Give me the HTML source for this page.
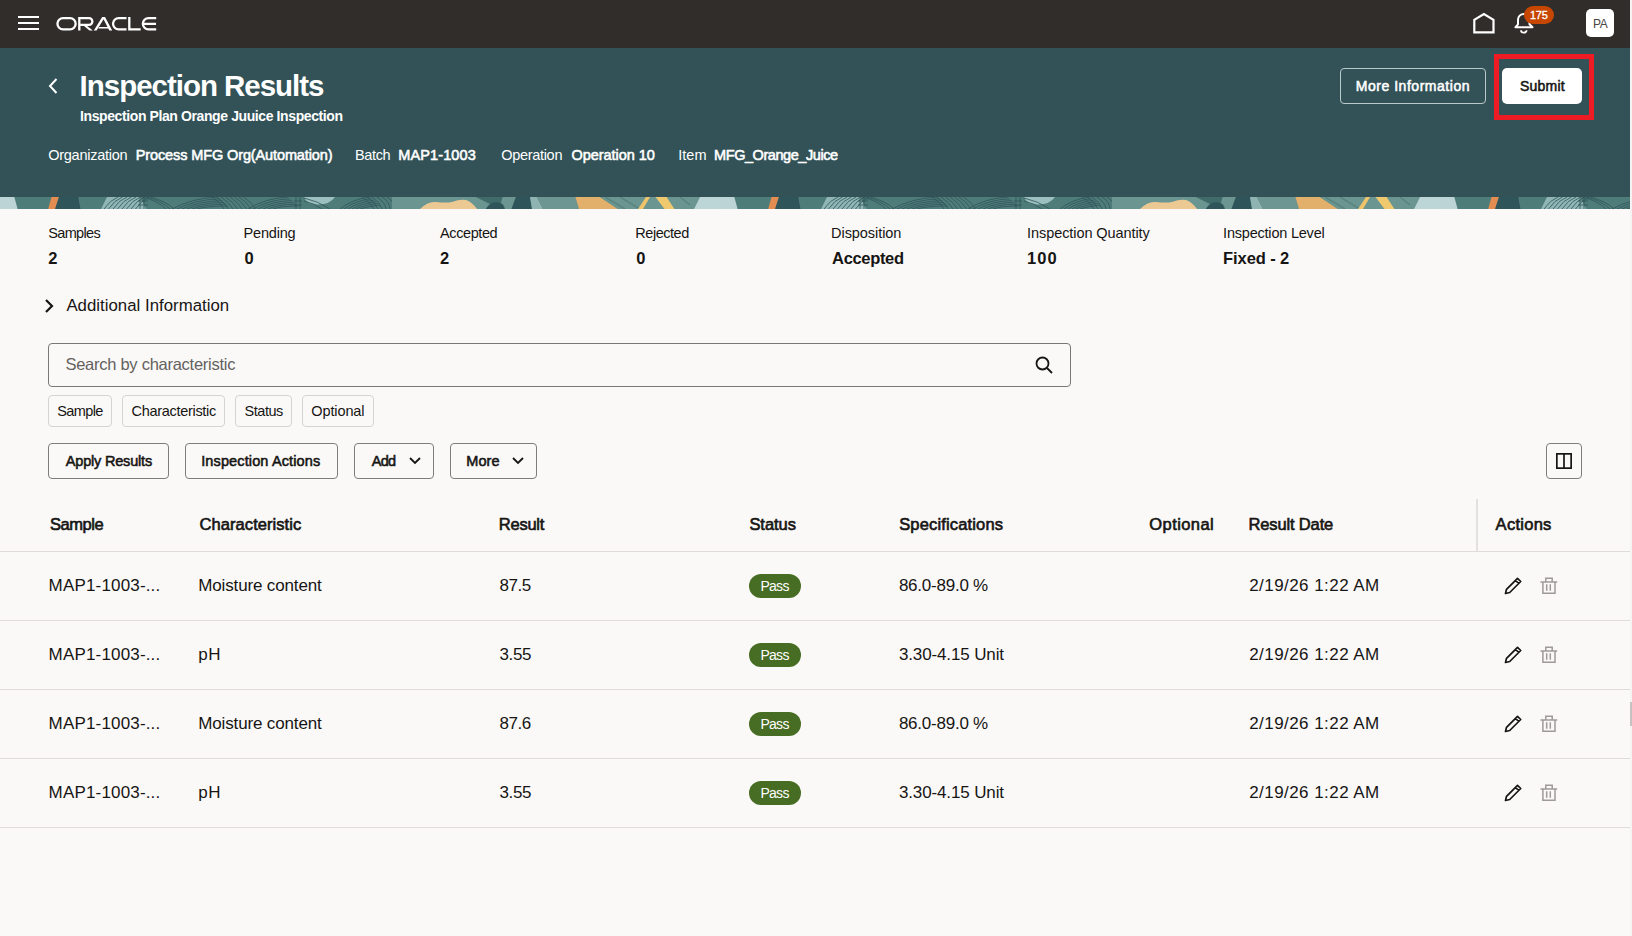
<!DOCTYPE html>
<html><head><meta charset="utf-8">
<style>
html,body{margin:0;padding:0;width:1632px;height:936px;overflow:hidden;background:#fbf9f8;font-family:"Liberation Sans",sans-serif;}
.t{position:absolute;white-space:pre;font-family:"Liberation Sans",sans-serif;}
.abs{position:absolute;}
#hdr{position:absolute;left:0;top:0;width:1630px;height:48px;background:#312d2a;}
#ban{position:absolute;left:0;top:48px;width:1630px;height:149px;background:#325257;}
#strip{position:absolute;left:0;top:197px;width:1630px;height:12px;}
.btn{position:absolute;box-sizing:border-box;border:1px solid #7f7d7b;border-radius:4px;background:#fbf9f8;}
.chip{position:absolute;box-sizing:border-box;border:1px solid #d6d4d2;border-radius:4px;background:#fbf9f8;}
.hl{position:absolute;left:0;width:1630px;height:1px;background:#dfdcd9;}
.badge{position:absolute;width:52px;height:24px;border-radius:12px;background:#476c23;}
</style></head><body>
<div id="hdr"></div>
<!-- hamburger -->
<div class="abs" style="left:18px;top:16px;width:21px;height:2px;background:#fff"></div>
<div class="abs" style="left:18px;top:22px;width:21px;height:2px;background:#fff"></div>
<div class="abs" style="left:18px;top:28px;width:21px;height:2px;background:#fff"></div>
<!-- ORACLE logo -->
<svg class="abs" style="left:56px;top:17px" width="101" height="14" viewBox="0 0 101 14">
<g fill="none" stroke="#fff" stroke-width="2.3">
<rect x="1.45" y="1.15" width="18.2" height="11.2" rx="5.6"/>
<path d="M23.3 13.5V1.15H33a3.35 3.35 0 0 1 0 6.7H24.5"/>
<path d="M70.5 1.15H62.65a5.6 5.6 0 0 0 0 11.2H70.5"/>
<path d="M73.3 0V12.35H84.7"/>
<path d="M100.2 1.15H92.45a5.6 5.6 0 0 0 0 11.2H100.2M88 6.9H100"/>
</g>
<g fill="#fff">
<path d="M26.8 7.9h3.1l6.9 5.6h-3.3z"/>
<path d="M46.2 0h2.8l7.2 13.5h-2.9L47.6 2.2L40.6 13.5h-2.8z"/>
<path d="M43.2 9.9h8.9l0.8 1.6h-10.6z"/>
</g>
</svg>
<!-- home -->
<svg class="abs" style="left:1472px;top:12px" width="24" height="23" viewBox="0 0 24 23">
<path d="M2.3 20.3V7.8L11.9 2.1L21.5 7.8V20.3z" fill="none" stroke="#fff" stroke-width="2.2"/>
</svg>
<!-- bell -->
<svg class="abs" style="left:1513px;top:12px" width="22" height="23" viewBox="0 0 22 23">
<path d="M2.5 15.2H19.5L16.5 12.3V7.65A5.75 5.75 0 0 0 5 7.65V12.3z" fill="none" stroke="#fff" stroke-width="2" stroke-linejoin="round"/>
<path d="M8 18.3a2.8 2.4 0 0 0 5.6 0" fill="none" stroke="#fff" stroke-width="1.8"/>
</svg>
<div class="abs" style="left:1524px;top:6px;width:30px;height:18px;border-radius:9px;background:#c74600"></div>
<span class="t" style="left:1530px;top:8px;font-size:11px;line-height:14px;color:#fff;letter-spacing:-0.3px;-webkit-text-stroke:0.3px #fff">175</span>
<!-- avatar -->
<div class="abs" style="left:1586px;top:9px;width:28px;height:28px;border-radius:5px;background:#fff"></div>
<span class="t" style="left:1593px;top:17px;font-size:12px;line-height:14px;color:#4a4745;letter-spacing:-0.3px">PA</span>
<div id="ban"></div>
<!-- back chevron -->
<svg class="abs" style="left:47px;top:77px" width="12" height="18" viewBox="0 0 12 18">
<path d="M9.5 2L3 9l6.5 7" fill="none" stroke="#fff" stroke-width="2"/>
</svg>
<div class="btn" style="left:1340px;top:68px;width:146px;height:36px;background:transparent;border-color:#bcc9ca"></div>
<div class="abs" style="left:1494px;top:54px;width:100px;height:66px;box-sizing:border-box;border:5px solid #ed1c24"></div>
<div class="abs" style="left:1502px;top:68px;width:80px;height:36px;border-radius:5px;background:#fff"></div>
<svg id="strip" width="1630" height="12" viewBox="0 0 1630 12"><defs><pattern id="pat" width="720" height="12" patternUnits="userSpaceOnUse">
<rect width="720" height="12" fill="#4e7c79"/>
<path d="M0 0H14.3L17.6 12H0z" fill="#bcd4d6"/>
<path d="M51.5 0H59L55.1 12H48.2z" fill="#e58c52"/>
<path d="M59 0H78.3L80.5 12H55.1z" fill="#2f5459"/>
<path d="M107 0H140L146 12H101z" fill="#8fb5b4"/>
<g fill="none" stroke="#2f5459" stroke-width="0.9" opacity="0.9"><path d="M104.0 12Q110.0 3 118.0 0 M108.5 12Q114.5 3 122.5 0 M113.0 12Q119.0 3 127.0 0 M117.5 12Q123.5 3 131.5 0 M122.0 12Q128.0 3 136.0 0 M126.5 12Q132.5 3 140.5 0 M131.0 12Q137.0 3 145.0 0 M135.5 12Q141.5 3 149.5 0 M140 0v12M144 0v12M138 4h10M138 8h10 M142 0Q158 4 166 12 M146 0Q162 4 170 12 M150 0Q166 4 174 12 M172 12Q192 1.0 218 0.0 M177 12Q195 2.6 220 1.8 M182 12Q198 4.2 222 3.6 M187 12Q201 5.8 224 5.4 M192 12Q204 7.4 226 7.2 M197 12Q207 9.0 228 9.0 M212.0 0Q220.0 5 224.0 12 M216.5 0Q224.5 5 228.5 12 M221.0 0Q229.0 5 233.0 12 M225.5 0Q233.5 5 237.5 12 M230.0 0Q238.0 5 242.0 12 M234.5 0Q242.5 5 246.5 12 M239.0 0Q247.0 5 251.0 12 M243.5 0Q251.5 5 255.5 12 M248 12Q266 1.0 288 0.0 M253 12Q269 2.6 290 1.8 M258 12Q272 4.2 292 3.6 M263 12Q275 5.8 294 5.4 M268 12Q278 7.4 296 7.2 M273 12Q281 9.0 298 9.0 M296 0v12M300 0v12M294 4h8M294 8h8"/></g>
<path d="M304 0H335Q330 7.5 318 7.5Q306 7.5 304 0z" fill="#9cc0bf"/>
<g fill="none" stroke="#2f5459" stroke-width="0.9" opacity="0.9"><path d="M304 1Q318 4 330 12 M304 4Q314 6 322 12 M340 12Q352 2.0 370 0.0 M344 12Q355 3.5 372 1.6 M348 12Q358 5.0 374 3.2 M352 12Q361 6.5 376 4.8 M356 12Q364 8.0 378 6.4 M360 12Q367 9.5 380 8.0 M362 0Q370 5 374 12 M367 0Q375 5 378 12 M372 0Q380 5 382 12 M377 0Q385 5 386 12 M382 0Q390 5 390 12 M387 0Q395 5 394 12"/></g>
<rect x="392" y="0" width="68" height="12" fill="#6b9591"/>
<path d="M460 0H476Q488 6 500 12H460z" fill="#6b9591"/>
<path d="M470 0H515L511 12H500Q488 6 476 0z" fill="#3f6b6a"/>
<path d="M420 12Q428 4 436 5Q446 6 452 5Q460 2 466 3Q472 5 477 12z" fill="#ecc893"/>
<path d="M485.7 12Q490 5 496 5Q502 5 505 12z" fill="#2f5459"/>
<path d="M502.6 0H515.9L511.5 12H505Q504 7 501 6z" fill="#6d9693"/>
<path d="M515.9 0H530L532 12H511.5z" fill="#2f5459"/>
<path d="M530 0H537L543 12H532z" fill="#8fb3b1"/>
<path d="M537 0H575.4L579 12H543z" fill="#6d9693"/>
<path d="M575.4 0H600L618 12H579z" fill="#e2b06a"/>
<path d="M600 0H700L694 12H618z" fill="#6b9591"/>
<g fill="none" stroke="#4f7c79" stroke-width="1.6" opacity="0.7">
<path d="M605 0L625 12M620 0L640 12M680 0L690 8"/>
</g>
<path d="M646 0H650L643 12H638z" fill="#f2c46a"/>
<path d="M655.5 0H666.6L674.4 12H664.5z" fill="#efc96e"/>
<path d="M700 0H720V12H694z" fill="#bcd5d7"/>
</pattern>
</defs><rect width="1630" height="12" fill="url(#pat)"/></svg>
<!-- additional info chevron -->
<svg class="abs" style="left:43px;top:298px" width="12" height="16" viewBox="0 0 12 16">
<path d="M3 2l6 6-6 6" fill="none" stroke="#161513" stroke-width="2.2"/>
</svg>
<!-- search -->
<div class="abs" style="left:48px;top:343px;width:1023px;height:44px;box-sizing:border-box;border:1px solid #7a7876;border-radius:4px"></div>
<svg class="abs" style="left:1034px;top:355px" width="20" height="20" viewBox="0 0 20 20">
<circle cx="8.5" cy="8.5" r="6" fill="none" stroke="#161513" stroke-width="1.8"/>
<path d="M13 13l5 5" stroke="#161513" stroke-width="1.8"/>
</svg>
<div class="chip" style="left:48px;top:395px;width:64px;height:32px"></div>
<div class="chip" style="left:122px;top:395px;width:103px;height:32px"></div>
<div class="chip" style="left:235px;top:395px;width:57px;height:32px"></div>
<div class="chip" style="left:302px;top:395px;width:72px;height:32px"></div>
<div class="btn" style="left:48px;top:443px;width:121px;height:36px"></div>
<div class="btn" style="left:185px;top:443px;width:153px;height:36px"></div>
<div class="btn" style="left:354px;top:443px;width:80px;height:36px"></div>
<div class="btn" style="left:450px;top:443px;width:87px;height:36px"></div>
<svg class="abs" style="left:408px;top:455px" width="14" height="10" viewBox="0 0 14 10"><path d="M2 3l5 5 5-5" fill="none" stroke="#161513" stroke-width="1.8"/></svg>
<svg class="abs" style="left:511px;top:455px" width="14" height="10" viewBox="0 0 14 10"><path d="M2 3l5 5 5-5" fill="none" stroke="#161513" stroke-width="1.8"/></svg>
<div class="btn" style="left:1546px;top:443px;width:36px;height:36px"></div>
<svg class="abs" style="left:1555px;top:452px" width="18" height="18" viewBox="0 0 18 18">
<rect x="1.85" y="1.85" width="14.3" height="14.3" fill="none" stroke="#161513" stroke-width="1.7"/>
<path d="M9 2v14" stroke="#161513" stroke-width="1.7"/>
</svg>
<!-- table -->
<div class="abs" style="left:1476px;top:499px;width:2px;height:52px;background:#e3e1df"></div>
<div class="hl" style="top:551px"></div>
<div class="hl" style="top:620px"></div>
<div class="hl" style="top:689px"></div>
<div class="hl" style="top:758px"></div>
<div class="hl" style="top:827px"></div>
<div class="badge" style="left:749px;top:574px"></div>
<svg class="abs" style="left:1502px;top:575px" width="22" height="22" viewBox="0 0 22 22"><path d="M3.5 18.5l1-4.2L15.5 3.3l3.2 3.2L7.7 17.5z M13.5 5.3l3.2 3.2" fill="none" stroke="#161513" stroke-width="1.7" stroke-linejoin="round"/></svg>
<svg class="abs" style="left:1539px;top:576px" width="20" height="20" viewBox="0 0 20 20"><path d="M1.5 5.9H18.2M6.8 5.9V2.3H13.2V5.9M3.9 5.9V17.2H16V5.9M7.7 8.2V14.7M11.3 8.2V14.7" fill="none" stroke="#9e9a97" stroke-width="1.5"/></svg>
<div class="badge" style="left:749px;top:643px"></div>
<svg class="abs" style="left:1502px;top:644px" width="22" height="22" viewBox="0 0 22 22"><path d="M3.5 18.5l1-4.2L15.5 3.3l3.2 3.2L7.7 17.5z M13.5 5.3l3.2 3.2" fill="none" stroke="#161513" stroke-width="1.7" stroke-linejoin="round"/></svg>
<svg class="abs" style="left:1539px;top:645px" width="20" height="20" viewBox="0 0 20 20"><path d="M1.5 5.9H18.2M6.8 5.9V2.3H13.2V5.9M3.9 5.9V17.2H16V5.9M7.7 8.2V14.7M11.3 8.2V14.7" fill="none" stroke="#9e9a97" stroke-width="1.5"/></svg>
<div class="badge" style="left:749px;top:712px"></div>
<svg class="abs" style="left:1502px;top:713px" width="22" height="22" viewBox="0 0 22 22"><path d="M3.5 18.5l1-4.2L15.5 3.3l3.2 3.2L7.7 17.5z M13.5 5.3l3.2 3.2" fill="none" stroke="#161513" stroke-width="1.7" stroke-linejoin="round"/></svg>
<svg class="abs" style="left:1539px;top:714px" width="20" height="20" viewBox="0 0 20 20"><path d="M1.5 5.9H18.2M6.8 5.9V2.3H13.2V5.9M3.9 5.9V17.2H16V5.9M7.7 8.2V14.7M11.3 8.2V14.7" fill="none" stroke="#9e9a97" stroke-width="1.5"/></svg>
<div class="badge" style="left:749px;top:781px"></div>
<svg class="abs" style="left:1502px;top:782px" width="22" height="22" viewBox="0 0 22 22"><path d="M3.5 18.5l1-4.2L15.5 3.3l3.2 3.2L7.7 17.5z M13.5 5.3l3.2 3.2" fill="none" stroke="#161513" stroke-width="1.7" stroke-linejoin="round"/></svg>
<svg class="abs" style="left:1539px;top:783px" width="20" height="20" viewBox="0 0 20 20"><path d="M1.5 5.9H18.2M6.8 5.9V2.3H13.2V5.9M3.9 5.9V17.2H16V5.9M7.7 8.2V14.7M11.3 8.2V14.7" fill="none" stroke="#9e9a97" stroke-width="1.5"/></svg>
<!-- scrollbar -->
<div class="abs" style="left:1630px;top:0;width:2px;height:936px;background:#f5f4f2"></div>
<div class="abs" style="left:1630px;top:702px;width:2px;height:24px;background:#c4c1be"></div>
<span class="t" style="left:79.60px;top:70.92px;font-size:29.5px;line-height:29.5px;font-weight:700;color:#ffffff;letter-spacing:-1.022px;">Inspection Results</span>
<span class="t" style="left:80.00px;top:109.15px;font-size:14px;line-height:14px;font-weight:700;color:#ffffff;letter-spacing:-0.396px;">Inspection Plan Orange Juuice Inspection</span>
<span class="t" style="left:48.20px;top:148.32px;font-size:14.5px;line-height:14.5px;font-weight:400;color:#ffffff;letter-spacing:-0.259px;">Organization</span>
<span class="t" style="left:135.78px;top:148.32px;font-size:14.5px;line-height:14.5px;font-weight:400;color:#ffffff;letter-spacing:-0.117px;-webkit-text-stroke:0.55px #ffffff;">Process MFG Org(Automation)</span>
<span class="t" style="left:355.00px;top:148.32px;font-size:14.5px;line-height:14.5px;font-weight:400;color:#ffffff;letter-spacing:-0.379px;">Batch</span>
<span class="t" style="left:398.28px;top:148.32px;font-size:14.5px;line-height:14.5px;font-weight:400;color:#ffffff;letter-spacing:0.118px;-webkit-text-stroke:0.55px #ffffff;">MAP1-1003</span>
<span class="t" style="left:501.20px;top:148.32px;font-size:14.5px;line-height:14.5px;font-weight:400;color:#ffffff;letter-spacing:-0.302px;">Operation</span>
<span class="t" style="left:571.48px;top:148.32px;font-size:14.5px;line-height:14.5px;font-weight:400;color:#ffffff;letter-spacing:-0.047px;-webkit-text-stroke:0.55px #ffffff;">Operation 10</span>
<span class="t" style="left:678.20px;top:148.32px;font-size:14.5px;line-height:14.5px;font-weight:400;color:#ffffff;letter-spacing:0.060px;">Item</span>
<span class="t" style="left:714.08px;top:148.32px;font-size:14.5px;line-height:14.5px;font-weight:400;color:#ffffff;letter-spacing:-0.436px;-webkit-text-stroke:0.55px #ffffff;">MFG_Orange_Juice</span>
<span class="t" style="left:1355.77px;top:79.35px;font-size:14px;line-height:14px;font-weight:400;color:#ffffff;letter-spacing:0.529px;-webkit-text-stroke:0.53px #ffffff;">More Information</span>
<span class="t" style="left:1520.07px;top:79.15px;font-size:14px;line-height:14px;font-weight:400;color:#161513;letter-spacing:0.197px;-webkit-text-stroke:0.53px #161513;">Submit</span>
<span class="t" style="left:48.20px;top:225.72px;font-size:14.5px;line-height:14.5px;font-weight:400;color:#161513;letter-spacing:-0.644px;">Samples</span>
<span class="t" style="left:243.60px;top:225.72px;font-size:14.5px;line-height:14.5px;font-weight:400;color:#161513;letter-spacing:-0.208px;">Pending</span>
<span class="t" style="left:440.10px;top:225.72px;font-size:14.5px;line-height:14.5px;font-weight:400;color:#161513;letter-spacing:-0.413px;">Accepted</span>
<span class="t" style="left:635.30px;top:225.72px;font-size:14.5px;line-height:14.5px;font-weight:400;color:#161513;letter-spacing:-0.466px;">Rejected</span>
<span class="t" style="left:831.10px;top:225.72px;font-size:14.5px;line-height:14.5px;font-weight:400;color:#161513;letter-spacing:-0.066px;">Disposition</span>
<span class="t" style="left:1027.10px;top:225.72px;font-size:14.5px;line-height:14.5px;font-weight:400;color:#161513;letter-spacing:-0.082px;">Inspection Quantity</span>
<span class="t" style="left:1223.10px;top:225.72px;font-size:14.5px;line-height:14.5px;font-weight:400;color:#161513;letter-spacing:-0.211px;">Inspection Level</span>
<span class="t" style="left:48.20px;top:249.83px;font-size:16.5px;line-height:16.5px;font-weight:700;color:#161513;letter-spacing:0.000px;">2</span>
<span class="t" style="left:244.60px;top:249.83px;font-size:16.5px;line-height:16.5px;font-weight:700;color:#161513;letter-spacing:0.000px;">0</span>
<span class="t" style="left:440.10px;top:249.83px;font-size:16.5px;line-height:16.5px;font-weight:700;color:#161513;letter-spacing:0.000px;">2</span>
<span class="t" style="left:636.30px;top:249.83px;font-size:16.5px;line-height:16.5px;font-weight:700;color:#161513;letter-spacing:0.000px;">0</span>
<span class="t" style="left:832.10px;top:249.83px;font-size:16.5px;line-height:16.5px;font-weight:700;color:#161513;letter-spacing:-0.342px;">Accepted</span>
<span class="t" style="left:1027.10px;top:249.83px;font-size:16.5px;line-height:16.5px;font-weight:700;color:#161513;letter-spacing:1.023px;">100</span>
<span class="t" style="left:1223.10px;top:249.83px;font-size:16.5px;line-height:16.5px;font-weight:700;color:#161513;letter-spacing:-0.095px;">Fixed - 2</span>
<span class="t" style="left:66.40px;top:297.58px;font-size:16.8px;line-height:16.8px;font-weight:400;color:#161513;letter-spacing:0.020px;">Additional Information</span>
<span class="t" style="left:65.40px;top:356.33px;font-size:16.5px;line-height:16.5px;font-weight:400;color:#64615e;letter-spacing:-0.262px;">Search by characteristic</span>
<span class="t" style="left:57.20px;top:403.92px;font-size:14.5px;line-height:14.5px;font-weight:400;color:#161513;letter-spacing:-0.600px;">Sample</span>
<span class="t" style="left:131.50px;top:403.92px;font-size:14.5px;line-height:14.5px;font-weight:400;color:#161513;letter-spacing:-0.299px;">Characteristic</span>
<span class="t" style="left:244.50px;top:403.92px;font-size:14.5px;line-height:14.5px;font-weight:400;color:#161513;letter-spacing:-0.451px;">Status</span>
<span class="t" style="left:311.30px;top:403.92px;font-size:14.5px;line-height:14.5px;font-weight:400;color:#161513;letter-spacing:-0.112px;">Optional</span>
<span class="t" style="left:65.78px;top:454.02px;font-size:14.5px;line-height:14.5px;font-weight:400;color:#161513;letter-spacing:-0.188px;-webkit-text-stroke:0.55px #161513;">Apply Results</span>
<span class="t" style="left:201.18px;top:454.02px;font-size:14.5px;line-height:14.5px;font-weight:400;color:#161513;letter-spacing:0.125px;-webkit-text-stroke:0.55px #161513;">Inspection Actions</span>
<span class="t" style="left:371.68px;top:454.02px;font-size:14.5px;line-height:14.5px;font-weight:400;color:#161513;letter-spacing:-0.693px;-webkit-text-stroke:0.55px #161513;">Add</span>
<span class="t" style="left:466.28px;top:454.02px;font-size:14.5px;line-height:14.5px;font-weight:400;color:#161513;letter-spacing:0.093px;-webkit-text-stroke:0.55px #161513;">More</span>
<span class="t" style="left:49.91px;top:516.03px;font-size:16.5px;line-height:16.5px;font-weight:400;color:#161513;letter-spacing:-0.459px;-webkit-text-stroke:0.63px #161513;">Sample</span>
<span class="t" style="left:199.61px;top:516.03px;font-size:16.5px;line-height:16.5px;font-weight:400;color:#161513;letter-spacing:0.059px;-webkit-text-stroke:0.63px #161513;">Characteristic</span>
<span class="t" style="left:498.81px;top:516.03px;font-size:16.5px;line-height:16.5px;font-weight:400;color:#161513;letter-spacing:-0.242px;-webkit-text-stroke:0.63px #161513;">Result</span>
<span class="t" style="left:749.41px;top:516.03px;font-size:16.5px;line-height:16.5px;font-weight:400;color:#161513;letter-spacing:-0.051px;-webkit-text-stroke:0.63px #161513;">Status</span>
<span class="t" style="left:899.21px;top:516.03px;font-size:16.5px;line-height:16.5px;font-weight:400;color:#161513;letter-spacing:0.155px;-webkit-text-stroke:0.63px #161513;">Specifications</span>
<span class="t" style="left:1149.31px;top:516.03px;font-size:16.5px;line-height:16.5px;font-weight:400;color:#161513;letter-spacing:0.426px;-webkit-text-stroke:0.63px #161513;">Optional</span>
<span class="t" style="left:1248.51px;top:516.03px;font-size:16.5px;line-height:16.5px;font-weight:400;color:#161513;letter-spacing:-0.146px;-webkit-text-stroke:0.63px #161513;">Result Date</span>
<span class="t" style="left:1495.61px;top:516.03px;font-size:16.5px;line-height:16.5px;font-weight:400;color:#161513;letter-spacing:0.269px;-webkit-text-stroke:0.63px #161513;">Actions</span>
<span class="t" style="left:48.60px;top:576.81px;font-size:17px;line-height:17px;font-weight:400;color:#161513;letter-spacing:0.168px;">MAP1-1003-...</span>
<span class="t" style="left:198.30px;top:576.81px;font-size:17px;line-height:17px;font-weight:400;color:#161513;letter-spacing:-0.150px;">Moisture content</span>
<span class="t" style="left:499.50px;top:576.81px;font-size:17px;line-height:17px;font-weight:400;color:#161513;letter-spacing:-0.444px;">87.5</span>
<span class="t" style="left:760.40px;top:578.85px;font-size:14px;line-height:14px;font-weight:400;color:#ffffff;letter-spacing:-0.708px;">Pass</span>
<span class="t" style="left:898.90px;top:576.81px;font-size:17px;line-height:17px;font-weight:400;color:#161513;letter-spacing:-0.236px;">86.0-89.0 %</span>
<span class="t" style="left:1249.20px;top:576.81px;font-size:17px;line-height:17px;font-weight:400;color:#161513;letter-spacing:0.443px;">2/19/26 1:22 AM</span>
<span class="t" style="left:48.60px;top:645.81px;font-size:17px;line-height:17px;font-weight:400;color:#161513;letter-spacing:0.168px;">MAP1-1003-...</span>
<span class="t" style="left:198.30px;top:645.81px;font-size:17px;line-height:17px;font-weight:400;color:#161513;letter-spacing:0.445px;">pH</span>
<span class="t" style="left:499.50px;top:645.81px;font-size:17px;line-height:17px;font-weight:400;color:#161513;letter-spacing:-0.377px;">3.55</span>
<span class="t" style="left:760.40px;top:647.85px;font-size:14px;line-height:14px;font-weight:400;color:#ffffff;letter-spacing:-0.708px;">Pass</span>
<span class="t" style="left:898.90px;top:645.81px;font-size:17px;line-height:17px;font-weight:400;color:#161513;letter-spacing:-0.128px;">3.30-4.15 Unit</span>
<span class="t" style="left:1249.20px;top:645.81px;font-size:17px;line-height:17px;font-weight:400;color:#161513;letter-spacing:0.443px;">2/19/26 1:22 AM</span>
<span class="t" style="left:48.60px;top:714.81px;font-size:17px;line-height:17px;font-weight:400;color:#161513;letter-spacing:0.168px;">MAP1-1003-...</span>
<span class="t" style="left:198.30px;top:714.81px;font-size:17px;line-height:17px;font-weight:400;color:#161513;letter-spacing:-0.150px;">Moisture content</span>
<span class="t" style="left:499.50px;top:714.81px;font-size:17px;line-height:17px;font-weight:400;color:#161513;letter-spacing:-0.444px;">87.6</span>
<span class="t" style="left:760.40px;top:716.85px;font-size:14px;line-height:14px;font-weight:400;color:#ffffff;letter-spacing:-0.708px;">Pass</span>
<span class="t" style="left:898.90px;top:714.81px;font-size:17px;line-height:17px;font-weight:400;color:#161513;letter-spacing:-0.236px;">86.0-89.0 %</span>
<span class="t" style="left:1249.20px;top:714.81px;font-size:17px;line-height:17px;font-weight:400;color:#161513;letter-spacing:0.443px;">2/19/26 1:22 AM</span>
<span class="t" style="left:48.60px;top:783.81px;font-size:17px;line-height:17px;font-weight:400;color:#161513;letter-spacing:0.168px;">MAP1-1003-...</span>
<span class="t" style="left:198.30px;top:783.81px;font-size:17px;line-height:17px;font-weight:400;color:#161513;letter-spacing:0.445px;">pH</span>
<span class="t" style="left:499.50px;top:783.81px;font-size:17px;line-height:17px;font-weight:400;color:#161513;letter-spacing:-0.377px;">3.55</span>
<span class="t" style="left:760.40px;top:785.85px;font-size:14px;line-height:14px;font-weight:400;color:#ffffff;letter-spacing:-0.708px;">Pass</span>
<span class="t" style="left:898.90px;top:783.81px;font-size:17px;line-height:17px;font-weight:400;color:#161513;letter-spacing:-0.128px;">3.30-4.15 Unit</span>
<span class="t" style="left:1249.20px;top:783.81px;font-size:17px;line-height:17px;font-weight:400;color:#161513;letter-spacing:0.443px;">2/19/26 1:22 AM</span>
</body></html>
